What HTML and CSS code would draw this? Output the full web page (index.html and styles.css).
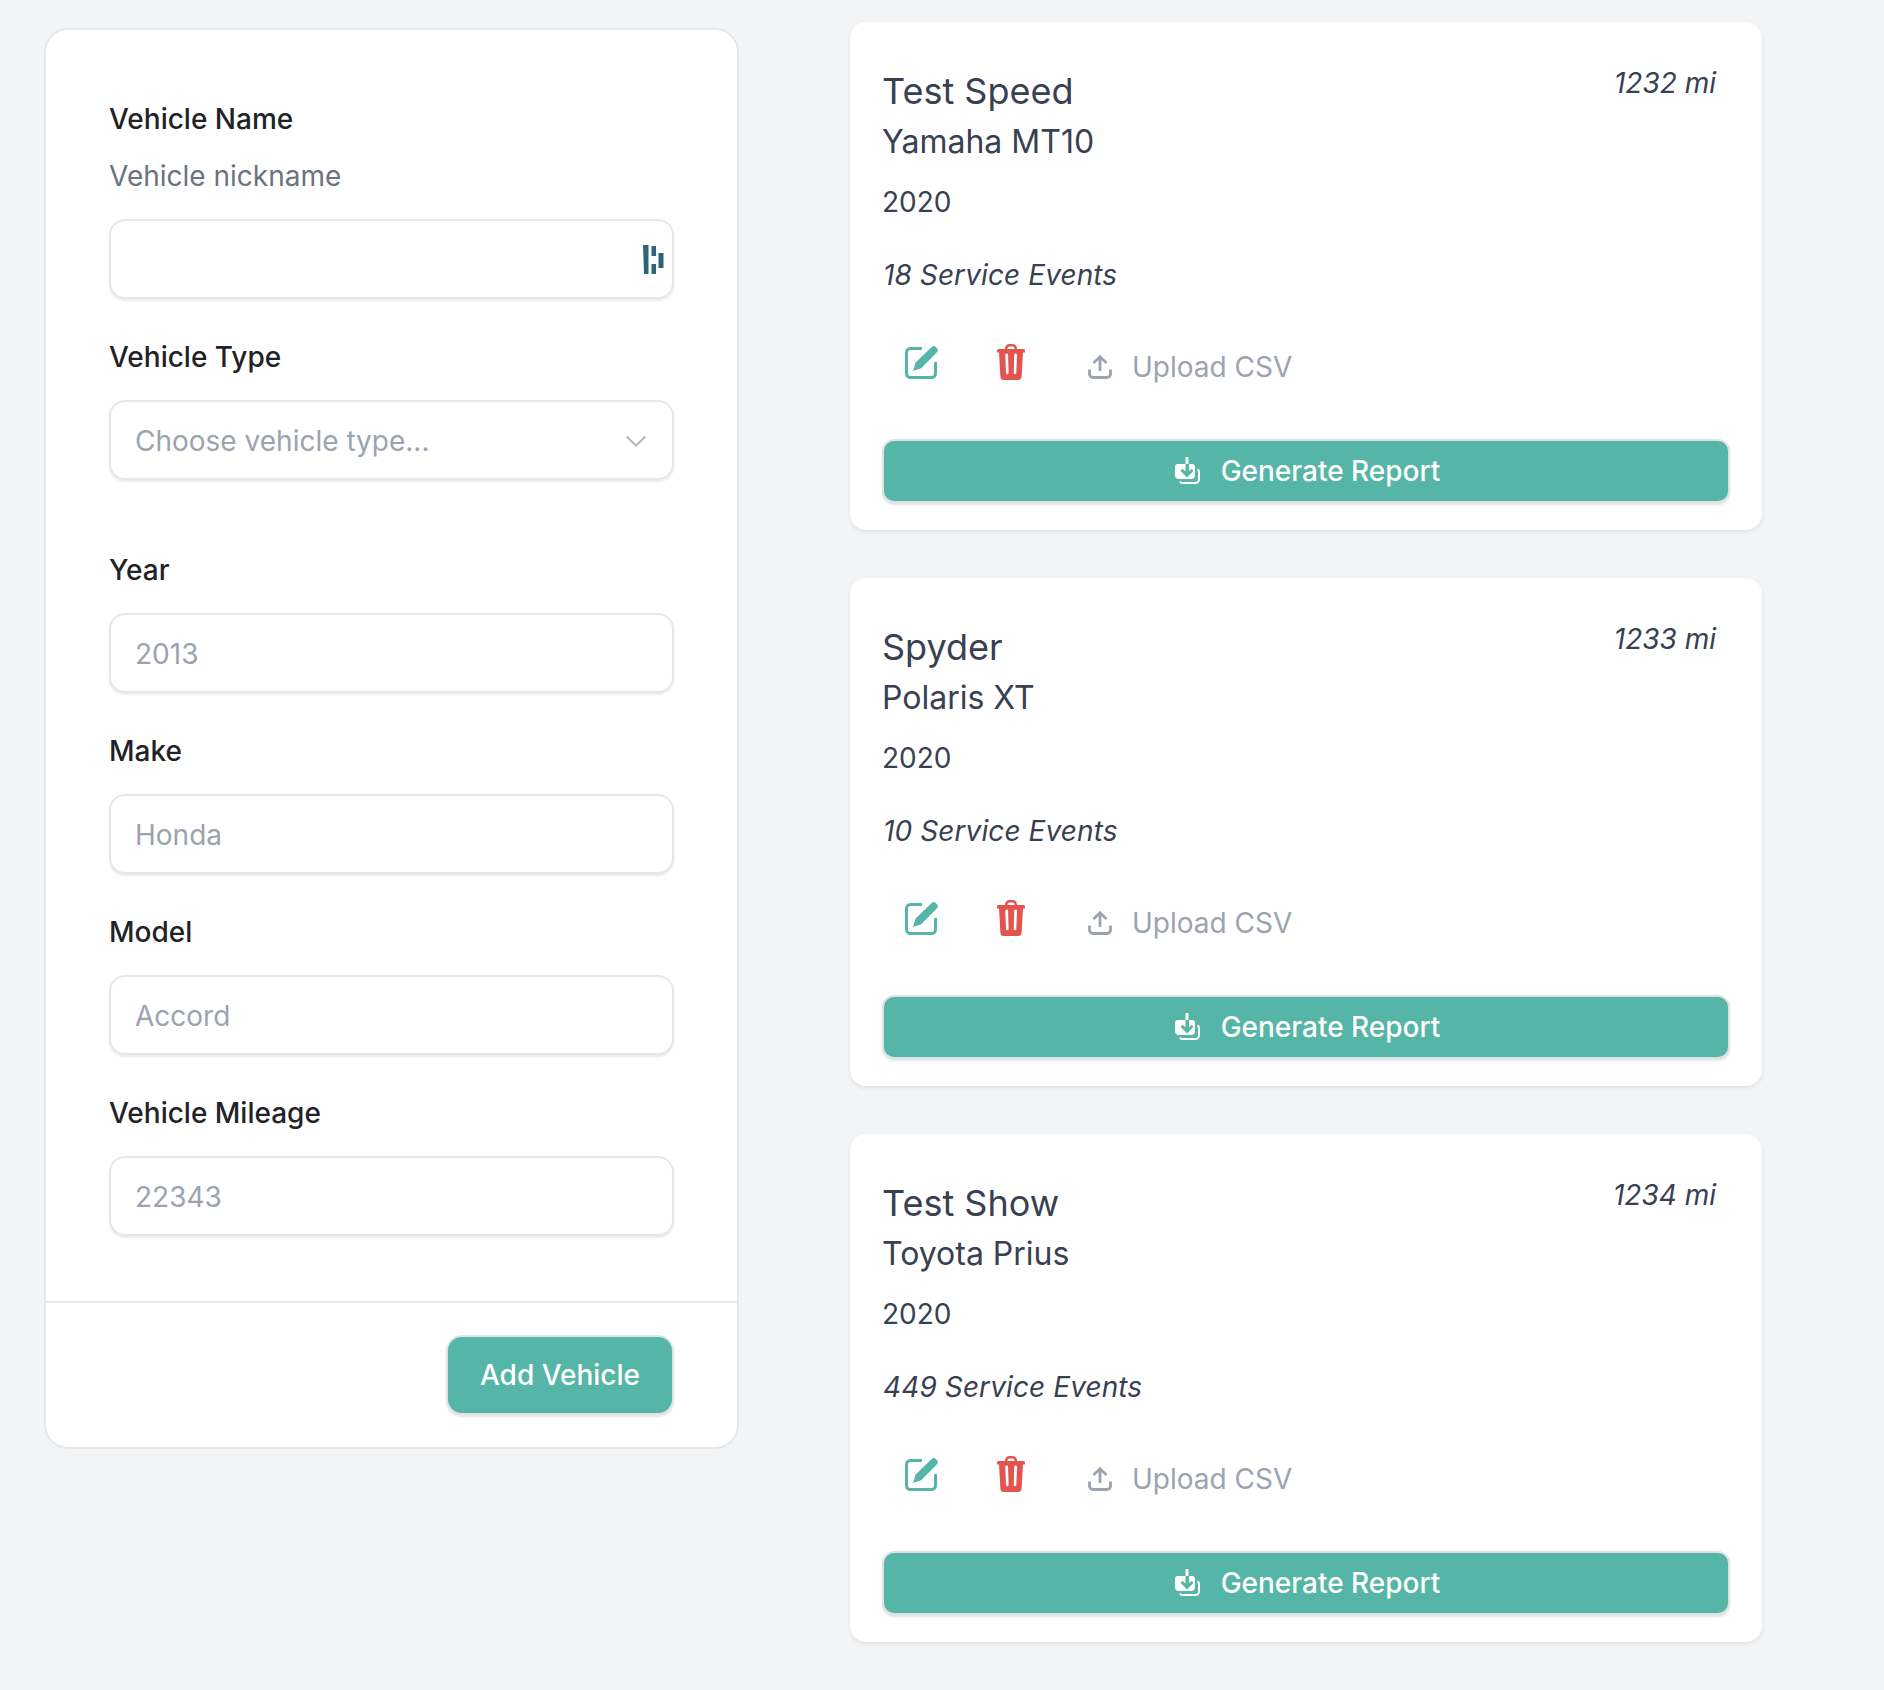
FILE: index.html
```html
<!DOCTYPE html>
<html lang="en">
<head>
    <meta charset="UTF-8">
    <meta name="viewport" content="width=device-width, initial-scale=1.0">
    <title>Vehicles</title>
    <link rel="stylesheet" href="styles.css">
</head>
<body>
    <svg class="icon-defs" width="0" height="0">
        <defs>
            <symbol id="icon-edit" viewBox="0 0 34 34">
                <path d="M17 3.500H5.500a4 4 0 0 0-4 4v21a4 4 0 0 0 4 4h21a4 4 0 0 0 4-4V17" fill="none" stroke="currentColor" stroke-width="3"/>
                <path d="M8 26l2.600-8.400L26.400 2.200a3.200 3.200 0 0 1 4.500 0l.9.9a3.200 3.200 0 0 1 0 4.500L16.200 23.200z" fill="currentColor"/>
            </symbol>
            <symbol id="icon-trash" viewBox="0 0 28 36">
                <path fill-rule="evenodd" fill="currentColor" d="M8 5V4.500A4.500 4.500 0 0 1 12.500 0h3A4.500 4.500 0 0 1 20 4.500V5h6.500A1.500 1.500 0 0 1 28 6.500V8.500H26L24.600 32.500A3.600 3.600 0 0 1 21 36H7a3.600 3.600 0 0 1-3.600-3.500L2 8.500H0V6.500A1.500 1.500 0 0 1 1.500 5zM10.500 5h7V4.500a2 2 0 0 0-2-2h-3a2 2 0 0 0-2 2zM8.300 11l.7 18a1.300 1.300 0 0 0 2.600 0l-.5-18a1.400 1.400 0 0 0-2.800 0zM17.200 11l-.5 18a1.300 1.300 0 0 0 2.600 0l.7-18a1.400 1.400 0 0 0-2.800 0z"/>
            </symbol>
            <symbol id="icon-upload" viewBox="0 0 24 24">
                <path d="M12 16V2M5.500 8L12 1.800 18.500 8M1.500 14.500V19a3.500 3.500 0 0 0 3.500 3.500h14a3.500 3.500 0 0 0 3.500-3.500v-4.500" fill="none" stroke="currentColor" stroke-width="2.800"/>
            </symbol>
            <symbol id="icon-download" viewBox="0 0 25 28">
                <path fill="currentColor" d="M4 7h6.500v7.500l-3-2.800-2 2L12 20.500l6.500-6.800-2-2-2.500 2.800V7H17a3 3 0 0 1 3 3v8a4 4 0 0 1-4 4H4a4 4 0 0 1-4-4V10a3 3 0 0 1 3-3z"/>
                <path fill="currentColor" d="M10.500 0h3v7h-3z"/>
                <path d="M22.500 12.500c1 .5 1.500 1.500 1.500 2.500v7.500a3.500 3.500 0 0 1-3.500 3.500H7.500c-1 0-2-.5-2.500-1.500" fill="none" stroke="currentColor" stroke-width="2"/>
            </symbol>
        </defs>
    </svg>

    <div class="page">
        <form class="vehicle-form">
            <div class="form-body">
                <div class="field">
                    <label for="name">Vehicle Name</label>
                    <p class="hint">Vehicle nickname</p>
                    <div class="input-wrap">
                        <input type="text" id="name">
                        <svg class="dash-icon" width="21" height="30" viewBox="0 0 21 30">
                            <path fill="#2f6478" d="M0 0h5.500v29H1zM8.500 1h4.500v10H8.500zM8.500 19h4.500v10H8.500zM15.500 8h5v15h-5z"/>
                        </svg>
                    </div>
                </div>
                <div class="field field-select">
                    <label for="type">Vehicle Type</label>
                    <div class="input-wrap">
                        <select id="type">
                            <option>Choose vehicle type...</option>
                        </select>
                        <svg class="chevron" width="22" height="12" viewBox="0 0 22 12">
                            <path d="M1.500 1.500L11 10.500l9.500-9" fill="none" stroke="#b4b7bd" stroke-width="2"/>
                        </svg>
                    </div>
                </div>
                <div class="field">
                    <label for="year">Year</label>
                    <input type="text" id="year" placeholder="2013">
                </div>
                <div class="field">
                    <label for="make">Make</label>
                    <input type="text" id="make" placeholder="Honda">
                </div>
                <div class="field">
                    <label for="model">Model</label>
                    <input type="text" id="model" placeholder="Accord">
                </div>
                <div class="field">
                    <label for="mileage">Vehicle Mileage</label>
                    <input type="text" id="mileage" placeholder="22343">
                </div>
            </div>
            <div class="form-footer">
                <button type="button" class="add-btn">Add Vehicle</button>
            </div>
        </form>

        <div class="vehicle-list">
            <div class="vehicle-card">
                <div class="card-top">
                    <h2>Test Speed</h2>
                    <span class="mileage">1232 mi</span>
                </div>
                <p class="make-model">Yamaha MT10</p>
                <p class="year">2020</p>
                <p class="events">18 Service Events</p>
                <div class="actions">
                    <svg class="edit-icon" width="34" height="34"><use href="#icon-edit"/></svg>
                    <svg class="trash-icon" width="28" height="36"><use href="#icon-trash"/></svg>
                    <span class="upload"><svg width="24" height="24"><use href="#icon-upload"/></svg>Upload CSV</span>
                </div>
                <button type="button" class="report-btn"><svg width="25" height="28"><use href="#icon-download"/></svg>Generate Report</button>
            </div>

            <div class="vehicle-card">
                <div class="card-top">
                    <h2>Spyder</h2>
                    <span class="mileage">1233 mi</span>
                </div>
                <p class="make-model">Polaris XT</p>
                <p class="year">2020</p>
                <p class="events">10 Service Events</p>
                <div class="actions">
                    <svg class="edit-icon" width="34" height="34"><use href="#icon-edit"/></svg>
                    <svg class="trash-icon" width="28" height="36"><use href="#icon-trash"/></svg>
                    <span class="upload"><svg width="24" height="24"><use href="#icon-upload"/></svg>Upload CSV</span>
                </div>
                <button type="button" class="report-btn"><svg width="25" height="28"><use href="#icon-download"/></svg>Generate Report</button>
            </div>

            <div class="vehicle-card">
                <div class="card-top">
                    <h2>Test Show</h2>
                    <span class="mileage">1234 mi</span>
                </div>
                <p class="make-model">Toyota Prius</p>
                <p class="year">2020</p>
                <p class="events">449 Service Events</p>
                <div class="actions">
                    <svg class="edit-icon" width="34" height="34"><use href="#icon-edit"/></svg>
                    <svg class="trash-icon" width="28" height="36"><use href="#icon-trash"/></svg>
                    <span class="upload"><svg width="24" height="24"><use href="#icon-upload"/></svg>Upload CSV</span>
                </div>
                <button type="button" class="report-btn"><svg width="25" height="28"><use href="#icon-download"/></svg>Generate Report</button>
            </div>
        </div>
    </div>
</body>
</html>
```

FILE: styles.css
```css
* {
    box-sizing: border-box;
}
body {
    margin: 0;
    background-color: #f3f4f6;
    font-family: Inter, "Liberation Sans", sans-serif;
    color: #374151;
}
p, h2 {
    margin: 0;
}
.icon-defs {
    position: absolute;
}
.page {
    display: flex;
    align-items: flex-start;
    gap: 111px;
    padding: 22px 0 0 44px;
    min-height: 1690px;
}

/* form card */
.vehicle-form {
    width: 695px;
    margin-top: 6px;
    background-color: #fff;
    border: 2px solid #e5e7eb;
    border-radius: 24px;
}
.form-body {
    padding: 69px 63px 27px;
}
.field {
    display: flex;
    flex-direction: column;
    margin-bottom: 38px;
}
.field-select {
    margin-bottom: 70px;
}
label {
    font-size: 28px;
    line-height: 40px;
    font-weight: 500;
    color: #1f2328;
    margin-bottom: 23px;
}
.hint {
    font-size: 28px;
    line-height: 40px;
    color: #6b7280;
    margin: -6px 0 23px;
}
.input-wrap {
    position: relative;
}
input, select {
    display: block;
    width: 100%;
    height: 80px;
    padding: 2px 24px 0;
    background-color: #fff;
    border: 2px solid #e5e7eb;
    border-radius: 16px;
    box-shadow: 0 2px 2px rgba(0, 0, 0, 0.08);
    font-family: inherit;
    font-size: 28px;
    color: #9ca3af;
    appearance: none;
    outline: none;
}
input::placeholder {
    color: #9ca3af;
    opacity: 1;
}
.dash-icon {
    position: absolute;
    top: 26px;
    right: 10px;
}
.chevron {
    position: absolute;
    top: 35px;
    right: 27px;
}
.form-footer {
    display: flex;
    justify-content: flex-end;
    padding: 32px 63px 32px;
    border-top: 2px solid #e5e7eb;
}
.add-btn {
    width: 228px;
    height: 80px;
    background-color: #55b5a6;
    border: 2px solid #e0e3e6;
    border-radius: 16px;
    box-shadow: 0 2px 2px rgba(0, 0, 0, 0.1);
    color: #fff;
    font-family: inherit;
    font-size: 28px;
    font-weight: 500;
}

/* vehicle cards */
.vehicle-list {
    display: flex;
    flex-direction: column;
    gap: 48px;
    width: 912px;
}
.vehicle-card {
    height: 508px;
    padding: 42px 32px 0;
    background-color: #fff;
    border-radius: 16px;
    box-shadow: 0 2px 4px rgba(0, 0, 0, 0.08);
}
.card-top {
    display: flex;
    justify-content: space-between;
    align-items: flex-start;
    padding-right: 14px;
}
h2 {
    font-size: 36px;
    line-height: 52px;
    font-weight: 400;
    padding-top: 1px;
}
.mileage {
    font-size: 28px;
    line-height: 40px;
    font-style: italic;
    margin-top: -1px;
}
.make-model {
    font-size: 32px;
    line-height: 48px;
    margin-top: 1px;
}
.year {
    font-size: 28px;
    line-height: 40px;
    margin-top: 16px;
}
.events {
    font-size: 28px;
    line-height: 40px;
    font-style: italic;
    letter-spacing: 0.1px;
    margin: 33px 0 0 1px;
}
.actions {
    display: flex;
    align-items: center;
    height: 40px;
    margin-top: 47px;
    padding-left: 23px;
}
.edit-icon {
    color: #55b5a6;
}
.trash-icon {
    color: #e3544e;
    margin-left: 58px;
}
.upload {
    display: flex;
    align-items: center;
    gap: 20px;
    margin-left: 63px;
    padding-top: 10px;
    font-size: 28px;
    line-height: 40px;
    color: #9ca3af;
}
.report-btn {
    display: flex;
    align-items: center;
    justify-content: center;
    gap: 21px;
    width: 100%;
    height: 64px;
    margin-top: 57px;
    padding: 0 0 0 3px;
    background-color: #55b5a6;
    border: 2px solid #dfe2e5;
    border-radius: 12px;
    box-shadow: 0 2px 2px rgba(0, 0, 0, 0.1);
    color: #fff;
    font-family: inherit;
    font-size: 28px;
    font-weight: 500;
}
```
